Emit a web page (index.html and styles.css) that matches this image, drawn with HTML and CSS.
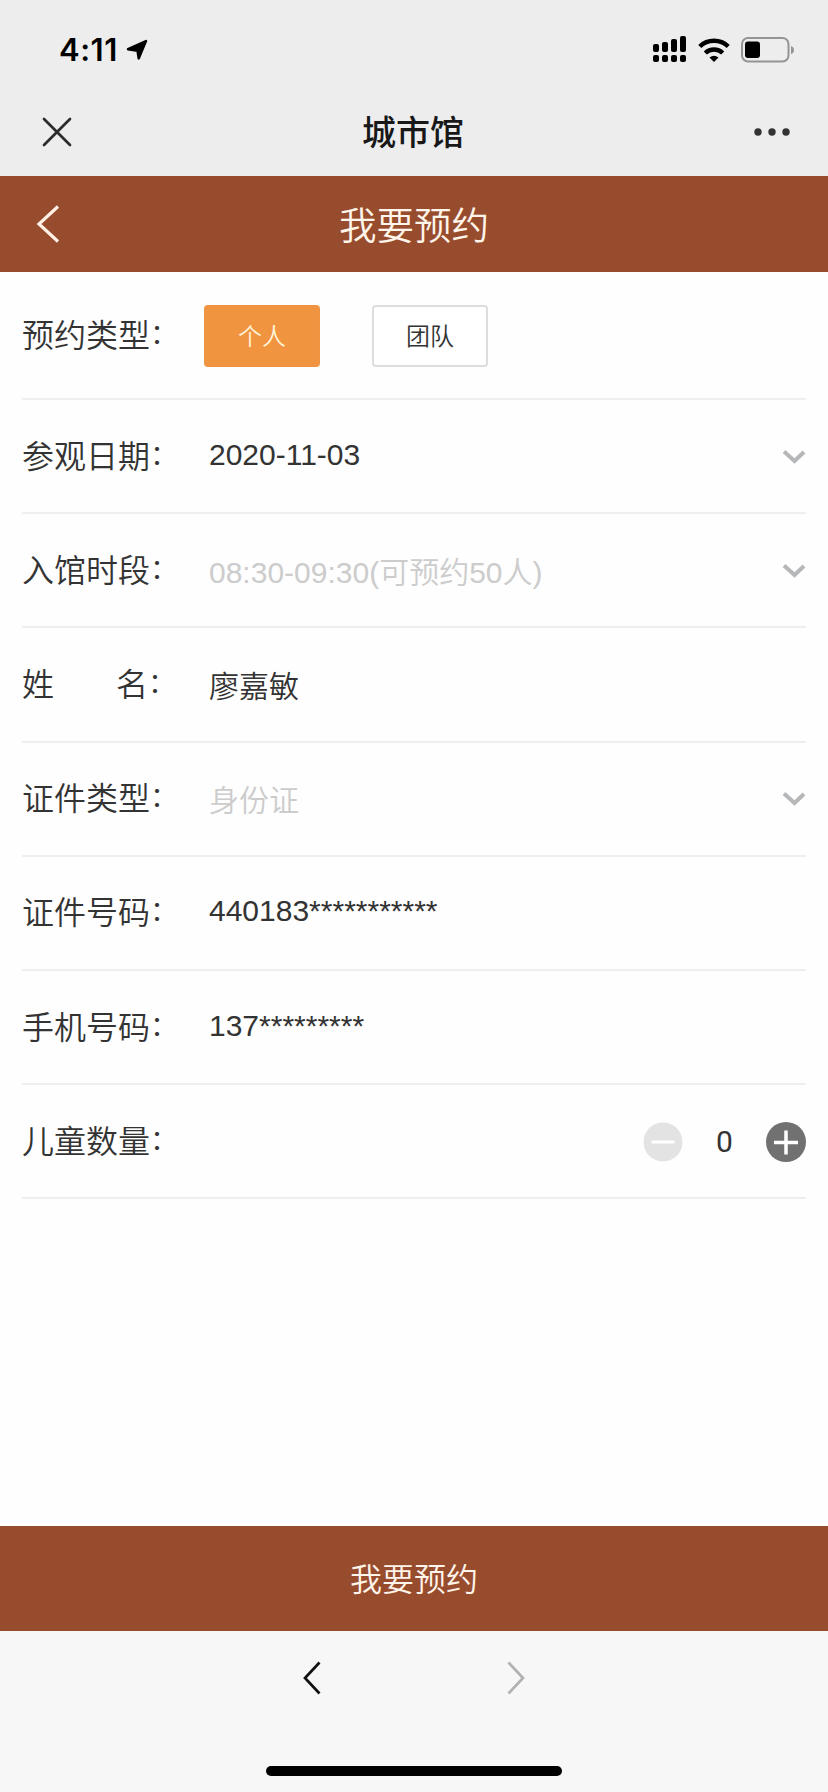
FILE: index.html
```html
<!DOCTYPE html>
<html lang="zh-CN">
<head>
  <meta charset="UTF-8">
  <meta name="viewport" content="width=device-width, initial-scale=1.0">
  <title>城市馆</title>
  <link rel="stylesheet" href="styles.css">
</head>
<body>
  <div class="status-bar">
    <span class="time">4:11</span>
    <svg class="location" width="22" height="22" viewBox="0 0 22 22"><path d="M20 2 12.700 19.500 11.500 11.700 2 10.200z" stroke="#000" stroke-width="2.400" stroke-linejoin="round"/></svg>
    <div class="status-icons">
      <svg width="33" height="26" viewBox="0 0 33 26">
        <rect x="0" y="8" width="6" height="8" rx="2"/>
        <rect x="9" y="6" width="6" height="10" rx="2"/>
        <rect x="18" y="3" width="6" height="13" rx="2"/>
        <rect x="27" y="0" width="6" height="16" rx="2"/>
        <rect x="0" y="19" width="6" height="7" rx="2"/>
        <rect x="9" y="19" width="6" height="7" rx="2"/>
        <rect x="18" y="19" width="6" height="7" rx="2"/>
        <rect x="27" y="19" width="6" height="7" rx="2"/>
      </svg>
      <svg class="wifi" width="32" height="24" viewBox="0 0 32 24">
        <path d="M1.800 8.500a20.500 20.500 0 0 1 28.400 0M7.300 15a12.500 12.500 0 0 1 17.400 0" fill="none" stroke="#000" stroke-width="4.500"/>
        <path d="M16 24l-4.500-4.500q4.500-3.400 9 0z"/>
      </svg>
      <svg class="battery" width="54" height="26" viewBox="0 0 54 26">
        <rect x="1" y="1" width="46.500" height="23.500" rx="6" fill="none" stroke="#949494" stroke-width="2"/>
        <rect x="4" y="4.500" width="15" height="16.500" rx="3"/>
        <path d="M50 9q3 1 3 4t-3 4z" fill="#949494"/>
      </svg>
    </div>
  </div>

  <div class="title-bar">
    <svg class="close" width="30" height="30" viewBox="0 0 30 30"><path d="M2 2l26 26M28 2 2 28"/></svg>
    <h1>城市馆</h1>
    <svg class="more" width="36" height="8" viewBox="0 0 36 8"><circle cx="4" cy="4" r="3.700"/><circle cx="18" cy="4" r="3.700"/><circle cx="32" cy="4" r="3.700"/></svg>
  </div>

  <header class="page-header">
    <svg class="back" width="24" height="40" viewBox="0 0 24 40"><path d="M22 2.500 3 20l19 17.500"/></svg>
    <h2>我要预约</h2>
  </header>

  <main class="form">
    <div class="row row-type">
      <span class="label">预约类型<span class="colon">：</span></span>
      <div class="types">
        <button class="type active">个人</button>
        <button class="type">团队</button>
      </div>
    </div>
    <div class="row">
      <span class="label">参观日期<span class="colon">：</span></span>
      <span class="value number">2020-11-03</span>
      <svg class="arrow" width="24" height="16" viewBox="0 0 24 16"><path d="M2 2.500 12.500 12 22 3"/></svg>
    </div>
    <div class="row">
      <span class="label">入馆时段<span class="colon">：</span></span>
      <span class="value placeholder">08:30-09:30(可预约50人)</span>
      <svg class="arrow" width="24" height="16" viewBox="0 0 24 16"><path d="M2 2.500 12.500 12 22 3"/></svg>
    </div>
    <div class="row">
      <span class="label"><span class="surname">姓</span>名<span class="colon">：</span></span>
      <span class="value">廖嘉敏</span>
    </div>
    <div class="row">
      <span class="label">证件类型<span class="colon">：</span></span>
      <span class="value placeholder">身份证</span>
      <svg class="arrow" width="24" height="16" viewBox="0 0 24 16"><path d="M2 2.500 12.500 12 22 3"/></svg>
    </div>
    <div class="row">
      <span class="label">证件号码<span class="colon">：</span></span>
      <span class="value number">440183***********</span>
    </div>
    <div class="row">
      <span class="label">手机号码<span class="colon">：</span></span>
      <span class="value number">137*********</span>
    </div>
    <div class="row">
      <span class="label">儿童数量<span class="colon">：</span></span>
      <div class="stepper">
        <svg width="40" height="40" viewBox="0 0 40 40"><circle cx="20" cy="20" r="19.500" fill="#e3e3e3"/><path d="M8.500 20h23" stroke="#fff" stroke-width="3"/></svg>
        <span class="count">0</span>
        <svg width="40" height="40" viewBox="0 0 40 40"><circle cx="20" cy="20" r="20" fill="#717171"/><path d="M8 20.500h24M20 8.500v24" stroke="#fff" stroke-width="3.500"/></svg>
      </div>
    </div>
  </main>

  <button class="submit">我要预约</button>

  <footer class="toolbar">
    <div class="toolbar-nav">
      <svg width="20" height="36" viewBox="0 0 20 36"><path d="M17.500 2.500 3 18l14.500 15.500" stroke="#111"/></svg>
      <svg width="20" height="36" viewBox="0 0 20 36"><path d="M2.500 2.500 17 18 2.500 33.500" stroke="#b2b2b2"/></svg>
    </div>
    <div class="home-indicator"></div>
  </footer>
</body>
</html>
```
FILE: styles.css
```css
* {
  box-sizing: border-box;
}
body {
  margin: 0;
  height: 1792px;
  display: flex;
  flex-direction: column;
  background: #fefefe;
  color: #333;
  font-family: "Liberation Sans", "Noto Sans CJK SC", sans-serif;
}
svg {
  display: block;
  flex: none;
}
button {
  font-family: inherit;
  padding: 0;
}
.status-bar {
  height: 88px;
  padding: 12px 33px 0 59px;
  display: flex;
  align-items: center;
  background: #ededed;
}
.time {
  width: 67px;
  font-family: Inter, sans-serif;
  font-size: 31px;
  font-weight: 600;
  line-height: 36px;
  letter-spacing: 0.5px;
  color: #000;
}
.status-icons {
  margin-left: auto;
  display: flex;
  align-items: center;
}
.status-icons svg:first-child {
  margin-top: -3px;
}
.wifi {
  margin-left: 12px;
}
.battery {
  margin-left: 11px;
}
.title-bar {
  height: 88px;
  padding: 0 38px 0 42px;
  display: flex;
  align-items: center;
  justify-content: space-between;
  background: #ededed;
}
.title-bar h1 {
  margin: 0;
  padding-top: 1px;
  font-size: 34px;
  font-weight: 500;
  line-height: 40px;
  color: #181818;
}
.close {
  fill: none;
  stroke: #2b2b2b;
  stroke-width: 2.7;
  stroke-linecap: round;
}
.more {
  fill: #333;
}
.page-header {
  height: 96px;
  padding: 0 36px;
  display: grid;
  grid-template-columns: 40px 1fr 40px;
  align-items: center;
  background: #984c2e;
}
.page-header h2 {
  margin: 0;
  padding-bottom: 3px;
  text-align: center;
  font-size: 37.5px;
  font-weight: 350;
  color: #fff5ea;
}
.back {
  fill: none;
  stroke: #fff0e4;
  stroke-width: 3.2;
}
.form {
  flex: 1;
  padding: 0 22px;
  font-weight: 350;
}
.row {
  height: 114.2px;
  padding-top: 1px;
  display: flex;
  align-items: center;
  border-bottom: 2px solid #efefef;
}
.row-type {
  height: 128px;
  padding-top: 2px;
}
.label {
  width: 187px;
  font-size: 32px;
  line-height: 48px;
  white-space: nowrap;
}
.surname {
  margin-right: 62px;
}
.colon {
  font-size: 28px;
  line-height: 1;
  vertical-align: 3px;
}
.value {
  flex: 1;
  padding-top: 4px;
  font-size: 30px;
  line-height: 44px;
}
.number {
  padding: 0 0 4px;
}
.placeholder {
  color: #ccc;
}
.arrow {
  fill: none;
  stroke: #b5b7b8;
  stroke-width: 4;
}
.types {
  display: flex;
  gap: 52px;
  margin-left: -5px;
}
.type {
  width: 116px;
  height: 62px;
  padding-bottom: 3px;
  border: 2px solid #ddd;
  border-radius: 4px;
  background: #fff;
  color: #333;
  font-size: 24px;
  font-weight: 350;
}
.active {
  border-color: #ef9440;
  background: #f19440;
  color: #fff3d8;
}
.stepper {
  margin-left: auto;
  display: flex;
  align-items: center;
}
.count {
  width: 83px;
  text-align: center;
  font-family: Roboto, sans-serif;
  font-size: 30px;
  font-weight: 400;
}
.submit {
  height: 105px;
  padding-bottom: 4px;
  border: 0;
  background: #984c2e;
  color: #fff5ea;
  font-size: 32px;
  font-weight: 350;
}
.toolbar {
  height: 161px;
  padding: 29px 0 16px;
  display: flex;
  flex-direction: column;
  justify-content: space-between;
  align-items: center;
  background: #f7f7f7;
}
.toolbar-nav {
  display: flex;
  gap: 184px;
  fill: none;
  stroke-width: 2.7;
}
.home-indicator {
  width: 296px;
  height: 10px;
  border-radius: 5px;
  background: #000;
}
```
